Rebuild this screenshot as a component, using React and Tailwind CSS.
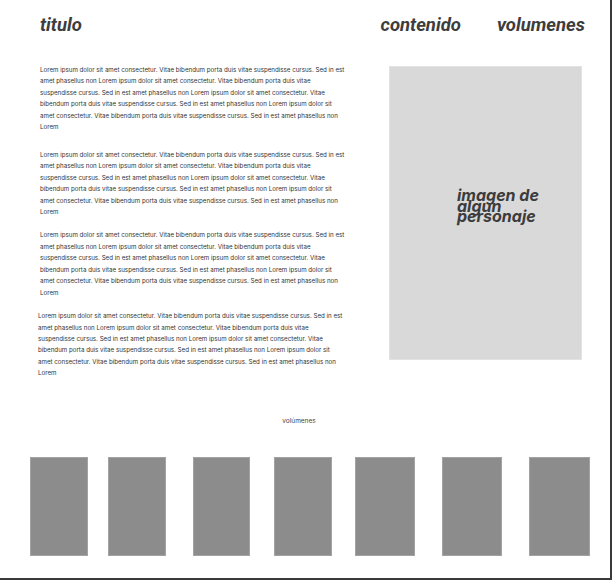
const lorem = [
  'Lorem ipsum dolor sit amet consectetur. Vitae bibendum porta duis vitae suspendisse cursus. Sed in est',
  'amet phasellus non Lorem ipsum dolor sit amet consectetur. Vitae bibendum porta duis vitae',
  'suspendisse cursus. Sed in est amet phasellus non Lorem ipsum dolor sit amet consectetur. Vitae',
  'bibendum porta duis vitae suspendisse cursus. Sed in est amet phasellus non Lorem ipsum dolor sit',
  'amet consectetur. Vitae bibendum porta duis vitae suspendisse cursus. Sed in est amet phasellus non',
  'Lorem',
]

const Paragraph = ({ className }) => (
  <p className={`text-[6.2px] leading-[11.4px] text-[#333] whitespace-nowrap ${className}`}>
    {lorem.map((line, i) => (
      <span key={i} className="block">{line}</span>
    ))}
  </p>
)

const volumes = [
  'ml-[30px] w-[58px]',
  'ml-[20px] w-[58px]',
  'ml-[27px] w-[57px]',
  'ml-[24px] w-[58px]',
  'ml-[23px] w-[60px]',
  'ml-[27px] w-[60px]',
  'ml-[27px] w-[61px]',
]

const App = () => {
  return (
    <div className="w-[612px] h-[580px] bg-white border-r-2 border-b-2 border-[#3a3a3a] overflow-hidden" style={{ fontFamily: 'Inter, sans-serif' }}>
      {/* header */}
      <header className="h-[64px] flex items-start pt-[13px] pl-[40px] pr-[25px] text-[#3d3d3d] italic font-bold text-[18.5px] leading-[24px]" style={{ fontFamily: 'Roboto, sans-serif' }}>
        <span>titulo</span>
        <span className="ml-auto">contenido</span>
        <span className="ml-[36px]">volumenes</span>
      </header>

      {/* contenido */}
      <main className="flex h-[315px]">
        <div className="pl-[40px]">
          <Paragraph />
          <Paragraph className="mt-[16.6px]" />
          <Paragraph className="mt-[12px]" />
          <Paragraph className="mt-[12.3px] -ml-[2px]" />
        </div>
        <div className="ml-auto mr-[28px] mt-[2px] w-[193px] h-[294px] bg-[#d9d9d9] border border-[#e2e2e2] flex items-center pl-[67px] pb-[14px]">
          <p className="text-[16px] leading-[10.6px] font-bold italic text-[#3c3c3c]">
            imagen de<br />algun<br />personaje
          </p>
        </div>
      </main>

      {/* volumenes */}
      <p className="mt-[37px] text-center pr-[12px] text-[6.5px] leading-[10px] text-[#444]">volúmenes</p>
      <div className="flex mt-[31px]">
        {volumes.map((cls, i) => (
          <div key={i} className={`${cls} h-[99px] bg-[#8c8c8c] border border-[#a3a3a3]`}></div>
        ))}
      </div>
    </div>
  )
}

export default App
